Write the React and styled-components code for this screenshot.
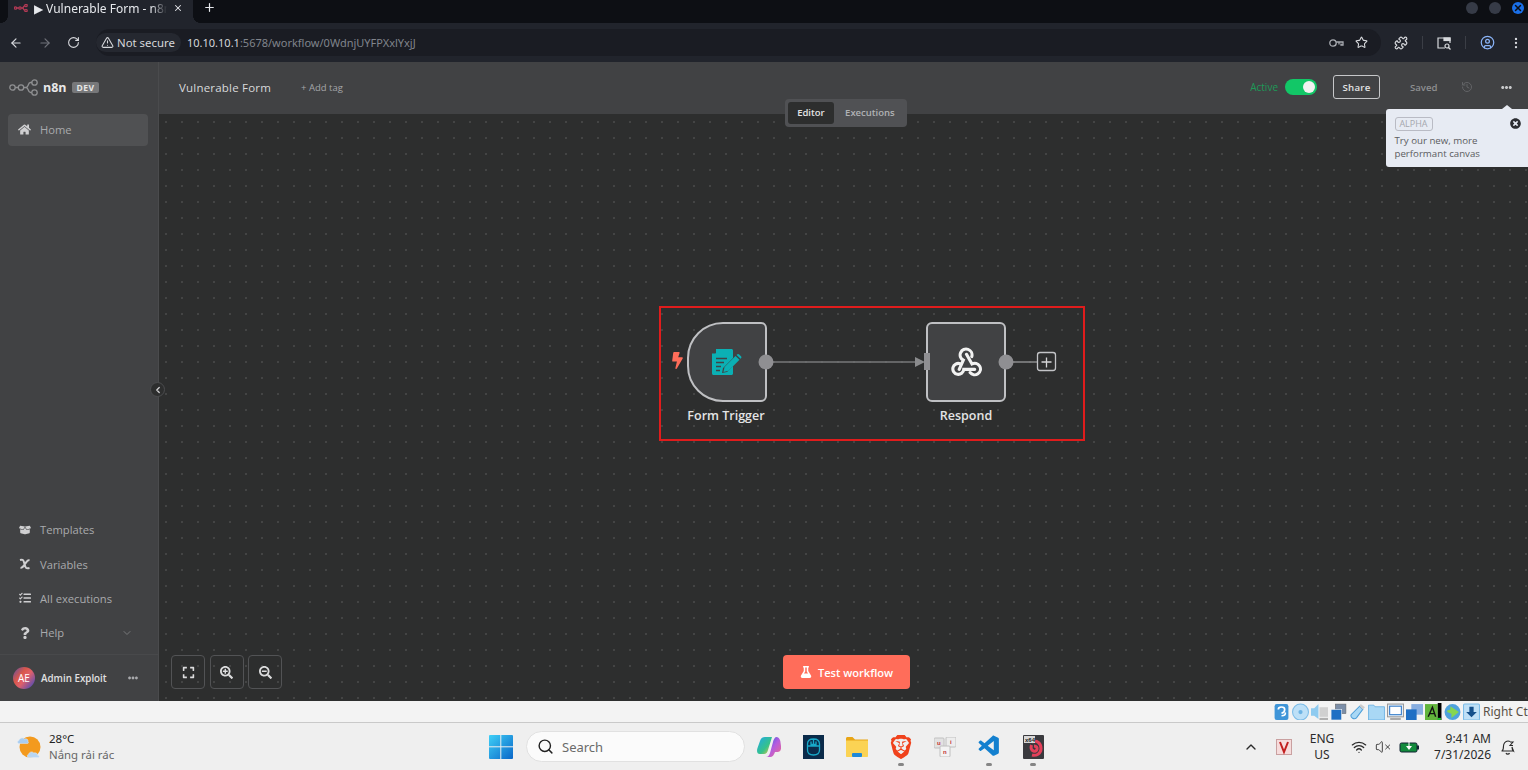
import React from "react";
import styled, { createGlobalStyle } from "styled-components";
import { ArrowLeft, ArrowRight, RotateCw, TriangleAlert, Star, Puzzle, CircleUser, EllipsisVertical, X, Plus, ChevronLeft, ChevronDown, ChevronUp, Search, Wifi, VolumeX, History } from "lucide-react";
import { FaHome, FaBolt, FaFlask, FaQuestion, FaExpand, FaSearchPlus, FaSearchMinus, FaEllipsisH, FaTimesCircle, FaTasks, FaBoxOpen } from "react-icons/fa";
import { SiBrave } from "react-icons/si";
import { VscVscode } from "react-icons/vsc";

const Global = createGlobalStyle`
  html, body { margin: 0; padding: 0; background: #f3f3f3; overflow: hidden; }
  * { box-sizing: border-box; }
  body { font-family: "Open Sans", "Noto Sans", sans-serif; }
`;

const Page = styled.div`width: 1528px; height: 770px; display: flex; flex-direction: column; overflow: hidden;`;

const TabStrip = styled.div`height: 23px; background: #0d0f14; display: flex; align-items: flex-start; padding-left: 8px; color: #e6e8ec; font: 12px "Noto Sans", sans-serif; flex: none;`;
const ActiveTab = styled.div`width: 185px; height: 23px; background: #21242c; display: flex; align-items: center; padding: 0 7px 7px 6px; gap: 6px; position: relative;
  &::before, &::after { content: ""; position: absolute; bottom: 0; width: 7px; height: 7px; background: radial-gradient(circle at var(--c), #0d0f14 6.6px, #21242c 7px); }
  &::before { left: -7px; --c: 0 0; }
  &::after { right: -7px; --c: 100% 0; }`;
const TabTitle = styled.span`width: 133px; overflow: hidden; white-space: nowrap; -webkit-mask-image: linear-gradient(to right, #000 88%, transparent); mask-image: linear-gradient(to right, #000 88%, transparent);`;
const NewTab = styled.div`margin-left: 10px; height: 15px; display: flex; align-items: center;`;
const WindowButtons = styled.div`margin-left: auto; height: 15px; display: flex; align-items: center; gap: 11px; padding-right: 4px;`;
const WindowDot = styled.div`width: 12px; height: 12px; border-radius: 50%; background: ${p => p.$close ? "#1a6fe8" : "#363b47"}; display: flex; align-items: center; justify-content: center; color: #0d0f14;`;

const Toolbar = styled.div`height: 39px; background: #21242c; display: flex; align-items: center; padding-left: 9px; color: #d8dade; flex: none;`;
const NavIcons = styled.div`display: flex; align-items: center; gap: 15px; width: 87px; color: #d8dade;`;
const Omnibox = styled.div`width: 1285px; height: 27px; border-radius: 14px; background: #1a1c23; display: flex; align-items: center; padding-right: 13px; font: 11.4px "Noto Sans", sans-serif;`;
const SecureChip = styled.div`width: 85px; height: 19px; padding-left: 5px; display: flex; align-items: center; gap: 3px; border-radius: 10px; background: #252830; color: #d5d7db; white-space: nowrap;`;
const Url = styled.div`margin-left: 6px; color: #80848c; font-size: 11px; white-space: nowrap; b { color: #d5d7db; font-weight: 400; }`;
const OmniActions = styled.div`margin-left: auto; display: flex; gap: 11px; align-items: center;`;
const ToolEnd = styled.div`display: flex; align-items: center; margin-left: 13px; gap: 14px;`;
const Divider = styled.div`width: 1px; height: 13px; background: #3b3e46;`;

const AppArea = styled.div`height: 639px; display: flex; background: #2d2e2e; flex: none;`;
const Sidebar = styled.aside`width: 159px; background: #414244; border-right: 1px solid #4a4b4d; display: flex; flex-direction: column; flex: none;`;
const Brand = styled.div`height: 52px; display: flex; align-items: center; padding: 0 0 2px 9px; color: #e8e8e8;`;
const BrandName = styled.span`font-weight: 700; font-size: 12.5px; margin-left: 3px;`;
const DevBadge = styled.span`margin-left: 5px; padding: 0 5px; height: 11px; line-height: 11px; background: #77787a; color: #e6e6e6; font-size: 8.5px; font-weight: 700; border-radius: 2px; letter-spacing: .4px;`;
const MenuRow = styled.div`margin: 0 10px 0 8px; height: ${p => p.$active ? "32px" : "34.4px"}; display: flex; align-items: center; padding: 0 0 2px 10px; gap: 9px; border-radius: 4px; background: ${p => p.$active ? "#505153" : "transparent"}; color: #a9aaad; font-size: 11.2px;`;
const MenuIcon = styled.span`width: 13px; display: flex; justify-content: center; color: #cfcfd1;`;
const Spacer = styled.div`flex: 1;`;
const HelpCaret = styled.span`margin-left: auto; margin-right: 15px; display: flex; color: #77787a;`;
const UserRow = styled.div`margin-top: 3px; height: 47px; border-top: 1px solid #48494b; display: flex; align-items: center; padding-left: 13px; color: #e0e0e1; font-size: 9.8px; font-weight: 600;`;
const Avatar = styled.div`width: 22px; height: 22px; border-radius: 50%; background: linear-gradient(130deg, #5a4fa8 0%, #d9574a 35%, #e0606a 55%, #6a4fa8 85%, #3f57b8 100%); color: #fff; font-size: 10px; font-weight: 400; display: flex; align-items: center; justify-content: center;`;
const UserName = styled.span`margin-left: 6px;`;
const UserMore = styled.span`margin-left: auto; margin-right: 20px; display: flex; color: #a9aaad;`;

const Main = styled.main`flex: 1; display: flex; flex-direction: column; position: relative; min-width: 0;`;
const Header = styled.header`height: 52px; background: #414244; display: flex; align-items: center; padding: 0 16px 2px 20px; color: #d8d9db; flex: none; font-size: 12px;`;
const WfTitle = styled.span`font-size: 11.5px; letter-spacing: .2px; width: 122px;`;
const AddTag = styled.span`font-size: 9.5px; color: #a5a6a9;`;
const HeadRight = styled.div`margin-left: auto; display: flex; align-items: center;`;
const ActiveLabel = styled.span`font-size: 10px; color: #1d9a58; margin-right: 7px;`;
const Switch = styled.div`width: 32px; height: 16px; background: #12c767; border-radius: 8px; display: flex; justify-content: flex-end; align-items: center; padding-right: 2px;`;
const Knob = styled.div`width: 12px; height: 12px; border-radius: 50%; background: #f2f2f2;`;
const ShareBtn = styled.button`margin-left: 16px; width: 47px; height: 24px; background: transparent; border: 1px solid #c6c7c9; border-radius: 3px; color: #e2e2e3; font: 600 9.7px "Open Sans", sans-serif; letter-spacing: .2px;`;
const Saved = styled.span`margin-left: 30px; width: 27px; font-size: 9.6px; font-weight: 600; color: #8e8f91;`;
const HistoryWrap = styled.span`margin-left: 24px; display: flex; color: #636467;`;
const MoreWrap = styled.span`margin-left: 28px; display: flex; color: #c8c9cb;`;

const Switcher = styled.div`position: absolute; left: 626px; top: 37px; width: 122px; height: 28px; padding: 3px; background: #505154; border-radius: 4px; display: flex; z-index: 3; font-size: 9.5px; font-weight: 600;`;
const SwitchTab = styled.div`height: 22px; padding: 0 0 2px ${p => p.$active ? "0" : "2px"}; display: flex; align-items: center; justify-content: center; border-radius: 3px; width: ${p => p.$active ? "47px" : "72px"}; background: ${p => p.$active ? "#2d2e2e" : "transparent"}; color: ${p => p.$active ? "#e4e4e5" : "#b1b2b5"};`;

const Popup = styled.div`position: absolute; left: 1227px; top: 47px; width: 142px; height: 58px; background: #e7ebf3; border-radius: 3px 0 0 3px; padding: 8px 8.5px; color: #5b5c60; font-size: 9.7px; line-height: 13px; z-index: 4;
  &::before { content: ""; position: absolute; left: 116px; top: -4px; border: 5px solid transparent; border-top: 0; border-bottom: 4px solid #e7ebf3; }`;
const AlphaTag = styled.span`display: block; width: 38px; height: 14px; line-height: 12px; text-align: center; border: 1px solid #b9bbc4; border-radius: 3px; color: #a5a7ae; font-size: 9px; margin-bottom: 3px;`;
const PopupClose = styled.span`position: absolute; right: 7px; top: 9px; display: flex; color: #2b2c30;`;

const Canvas = styled.div`flex: 1; position: relative; background-color: #2d2e2e; background-image: radial-gradient(circle at center, #505151 0.6px, transparent 0.9px); background-size: 16px 16px; background-position: -1px 0;`;
const RedFrame = styled.div`position: absolute; left: 500px; top: 192px; width: 426px; height: 135px; border: 2px solid #e01c1c;`;
const Edges = styled.svg`position: absolute; left: 0; top: 0; width: 1369px; height: 587px; pointer-events: none;`;
const Node = styled.div`position: absolute; left: ${p => p.$x}px; top: 208px; width: 80px; height: 80px; background: #414244; border: 2px solid #bfc0c3; border-radius: ${p => p.$trigger ? "36px 6px 6px 36px" : "6px"}; display: flex; align-items: center; justify-content: center; color: #f2f2f2;`;
const NodeLabel = styled.div`position: absolute; left: ${p => p.$x}px; top: 293px; width: 120px; text-align: center; color: #e4e4e5; font-size: 12.5px; font-weight: 600;`;
const Bolt = styled.span`position: absolute; left: 510px; top: 238px; display: flex; color: #ff6d5a;`;
const CollapseBtn = styled.div`position: absolute; left: -9px; top: 268px; width: 15px; height: 15px; border-radius: 50%; background: #2d2e2e; border: 1px solid #4c4d4f; display: flex; align-items: center; justify-content: center; color: #d0d0d2; z-index: 2;`;
const CanvasTools = styled.div`position: absolute; left: 12px; bottom: 12px; display: flex; gap: 4.500px;`;
const ToolBtn = styled.div`width: 34px; height: 34px; border: 1px solid #525355; border-radius: 4px; display: flex; align-items: center; justify-content: center; color: #dcdcdd;`;
const TestBtn = styled.button`position: absolute; left: 624px; bottom: 12px; width: 127px; height: 34px; border: 0; border-radius: 4px; background: #ff6d5a; color: #fff; font: 600 11.100px "Open Sans", sans-serif; display: flex; align-items: center; justify-content: center; gap: 6px;`;

const VBoxBar = styled.div`height: 22px; background: #f3f3f3; border-bottom: 1px solid #c9c9c9; display: flex; align-items: center; overflow: hidden; padding-left: 1273px; font: 12px "Noto Sans", sans-serif; color: #5a5046; flex: none;`;
const VBoxIcons = styled.div`display: flex; gap: 2px; align-items: center; flex: none;`;
const VBoxIcon = styled.svg`width: 17px; height: 17px; display: block;`;
const RightCtrl = styled.span`margin-left: 3px; white-space: nowrap; flex: none; width: 46px; overflow: hidden;`;

const Taskbar = styled.div`height: 47px; background: #efefef; display: flex; align-items: center; position: relative; flex: none; color: #222;`;
const Weather = styled.div`width: 489px; display: flex; align-items: center; padding-left: 17px; flex: none;`;
const WeatherText = styled.div`margin-left: 6px; font: 11.500px/16px "Noto Sans", sans-serif; color: #222; small { display: block; font-size: 11.400px; color: #666; }`;
const TaskCenter = styled.div`display: flex; align-items: center; flex: none;`;
const SearchBox = styled.div`margin: 0 2px 0 13px; width: 219px; height: 31px; background: #fbfbfb; border: 1px solid #e1e1e1; border-radius: 16px; display: flex; align-items: center; padding-left: 10px; gap: 8px; color: #6a6a6a; font: 13px "Noto Sans", sans-serif;`;
const AppSlot = styled.div`width: 44px; height: 47px; display: flex; align-items: center; justify-content: center; position: relative; color: ${p => p.$color || "inherit"};
  &::after { content: ""; display: ${p => p.$running ? "block" : "none"}; position: absolute; bottom: 4px; left: 19px; width: 6px; height: 3px; border-radius: 2px; background: #858585; }`;
const Tray = styled.div`position: absolute; right: 0; top: 0; height: 47px; left: 1240px; padding-left: 3px; display: flex; align-items: center; color: #2a2a2a; font: 12px/16px "Noto Sans", sans-serif;`;
const VBadge = styled.svg`width: 16px; height: 16px; margin-left: 17px;`;
const TrayLang = styled.div`width: 30px; text-align: center; margin-left: 15px;`;
const TrayIcons = styled.div`display: flex; gap: 8px; align-items: center; margin-left: 14px;`;
const Clock = styled.div`margin-left: 16px; text-align: right; width: 56px; white-space: nowrap; display: flex; flex-direction: column; align-items: flex-end;`;
const Bell = styled.div`margin-left: 9px; display: flex;`;

const Logo = () => (
  <svg width="31" height="17" viewBox="0 0 31 17" fill="none" stroke="#8f9092" strokeWidth="1.300">
    <circle cx="3.500" cy="8.500" r="2.700" /><circle cx="12" cy="8.500" r="2.700" /><circle cx="25.500" cy="3.500" r="2.700" /><circle cx="25.500" cy="13.500" r="2.700" />
    <path d="M6.200 8.500h3.100M14.700 8.500h2.300c3 0 1.500-5 4.500-5h1.800M17 8.500c3 0 1.500 5 4.500 5h1.300" />
  </svg>
);

const WebhookIcon = () => (
  <svg width="31" height="31" viewBox="0 0 34 34" fill="none" stroke="#f2f2f2" strokeWidth="3.400" strokeLinecap="round">
    <path d="M9 24.500 L13.500 14.500 A6.500 6.500 0 1 1 22.800 10.500" />
    <path d="M17 8 L23 18.600 A6.300 6.300 0 1 1 21 28" />
    <path d="M26 24.500 H14 A6 6 0 1 1 10 18.300" />
  </svg>
);

const FormIcon = () => (
  <svg width="30" height="26" viewBox="0 0 30 26">
    <path fill="#0bb0b4" d="M4 0h15.500c.8 0 1.500.7 1.500 1.500V9L11 19l-1 5 5-1 6-6v7.500c0 .8-.7 1.500-1.500 1.500h-18C.7 26 0 25.300 0 24.500V4.500h3c.6 0 1-.4 1-1z" />
    <path stroke="#414244" strokeWidth="1.500" d="M4 9.500h11M4 13.500h8M4 17.500h5M4 21.500h4" fill="none" />
    <path fill="#0bb0b4" d="M23.500 7l4 3.800-11 11-5 1.200 1-5z" />
    <path fill="#0bb0b4" d="M25 5.500c.7-.7 1.500-.7 2.200 0l1.800 1.700c.6.700.6 1.400 0 2.100l-.5.400-3.900-3.800z" />
  </svg>
);

const WeatherIcon = () => (
  <svg width="26" height="26" viewBox="0 0 26 26">
    <circle cx="13" cy="13" r="10.500" fill="#f39a1e" />
    <path fill="#a9cdf0" stroke="#d9e9f8" strokeWidth=".5" d="M2 9.500c-1.500 0-2-2.500 0-3C2.500 4 6 3 7.500 5c2-.8 4 .5 3.500 2.500.8.500.5 2-.5 2z" />
    <path fill="#b8d6f3" stroke="#e1edf9" strokeWidth=".5" d="M12 23.500c-2 0-2.300-3-.2-3.300.2-2.200 3.500-3.200 5-1.200 2.200-.8 4 .8 3.700 2.200 2 0 2.500 2.300.5 2.300z" />
  </svg>
);

const WinLogo = () => (
  <svg width="24" height="24" viewBox="0 0 24 24">
    <defs><linearGradient id="wl" x1="0" y1="0" x2="1" y2="1"><stop offset="0" stopColor="#3fd0f7" /><stop offset="1" stopColor="#0a66c8" /></linearGradient></defs>
    <rect width="24" height="24" fill="url(#wl)" rx="1" />
    <path stroke="#efefef" strokeWidth="1" d="M11.800 0v24M0 11.800h24" />
  </svg>
);

const Copilot = () => (
  <svg width="24" height="24" viewBox="0 0 24 24">
    <defs>
      <linearGradient id="c1" x1="0" y1="0" x2="1" y2="1"><stop offset="0" stopColor="#1fa8e8" /><stop offset=".6" stopColor="#36c28a" /><stop offset="1" stopColor="#f5c73a" /></linearGradient>
      <linearGradient id="c2" x1="0" y1="0" x2="1" y2="1"><stop offset="0" stopColor="#2460e0" /><stop offset=".5" stopColor="#b45ce0" /><stop offset="1" stopColor="#f06a8a" /></linearGradient>
    </defs>
    <path fill="url(#c1)" d="M8 2h7l-4 13c-.6 2.500-2 4-4 4H3C0 19-.5 16 .5 13L3 6c.8-2.500 2.500-4 5-4z" />
    <path fill="url(#c2)" d="M13 22H9c2 0 3-1.500 4-4l3-11c.6-2.500 1.500-4 3-5 2.500 0 3.500 1.500 4.300 4l.7 5c.5 4-1 6-3.500 6H18c-1 3-2.500 5-5 5z" />
  </svg>
);

const MouseApp = () => (
  <svg width="21" height="24" viewBox="0 0 21 24">
    <rect width="21" height="24" fill="#0b2b4a" />
    <path fill="none" stroke="#18a9c9" strokeWidth="1.300" d="M4.500 9c0-3.500 2.500-5 6-5s6 1.500 6 5v6c0 3.500-2.500 5-6 5s-6-1.500-6-5zM4.500 11h12M10.500 4v7M8 6.500v3h5v-3" />
  </svg>
);

const Folder = () => (
  <svg width="22" height="20" viewBox="0 0 22 20">
    <path fill="#e8a516" d="M0 1.500C0 .7.700 0 1.500 0h5l2.500 2.500h13V8H0z" />
    <path fill="#fbd354" d="M0 3.500h22V19c0 .6-.4 1-1 1H1c-.6 0-1-.4-1-1z" />
    <rect x="6" y="16" width="10" height="4" rx="1" fill="#1e88d8" />
  </svg>
);

const UniKey = () => (
  <svg width="22" height="20" viewBox="0 0 22 20" fontFamily="Liberation Sans" fontWeight="700" fontSize="6">
    <rect x="0" y="1" width="10" height="10" rx="1" fill="#e2e2e2" stroke="#c0c0c0" />
    <rect x="12" y="0" width="10" height="10" rx="1" fill="#ededed" stroke="#c0c0c0" />
    <rect x="6" y="9" width="10" height="11" rx="1" fill="#f3f3f3" stroke="#c0c0c0" />
    <text x="3" y="8" fill="#c23434">u</text><text x="16" y="7" fill="#c23434">i</text><text x="9" y="17" fill="#c23434">n</text>
  </svg>
);

const X64 = () => (
  <svg width="21" height="24" viewBox="0 0 21 24">
    <rect width="21" height="24" rx="1" fill="#3a3a3e" />
    <path fill="none" stroke="#e4405a" strokeWidth="3" d="M9 7c5-2 9 1 9 6.500S13 21 9 20M11 11c2.500 0 3.500 1.500 3 3.500-.5 1.500-2 2-3.500 1.500-2-.8-3-3-2-6" />
    <rect x="1" y="1" width="11" height="7" fill="#d8d8d8" />
    <text x="2" y="7" fontSize="6" fontWeight="700" fontFamily="Liberation Sans" fill="#222">x64</text>
  </svg>
);

const Bat = () => (
  <svg width="20" height="12" viewBox="0 0 20 12">
    <rect x="1" y="2" width="17" height="9" rx="1.500" fill="#128a3c" stroke="#123" strokeWidth="1" />
    <rect x="18" y="4.500" width="2" height="4" fill="#123" />
    <path fill="#fff" d="M9.500 0v5H7l3 4 3-4h-2.500V0z" />
  </svg>
);

const vboxShapes = [
  <><rect x="1.500" y="1" width="13" height="15" rx="2" fill="#3f95d8" /><path d="M5 6c0-3 6-3 6 0s-3 3.500-3 3.500M8 12c3 0 4-1 3.500-3" stroke="#fff" strokeWidth="1.600" fill="none" /></>,
  <><circle cx="8" cy="8.500" r="7.500" fill="#bde0f7" stroke="#7bbce8" /><circle cx="8" cy="8.500" r="2" fill="#6db3e4" /></>,
  <><path d="M0 5h3l4-4v14l-4-3H0z" fill="#8fcbf0" /><rect x="8" y="4" width="8" height="9" fill="#d0d0d0" /><rect x="8" y="14" width="8" height="2" fill="#b0b0b0" /></>,
  <><rect x="5" y="1" width="10" height="9" fill="#7b8ea8" stroke="#666" strokeWidth=".5" /><rect x="1" y="6" width="10" height="10" fill="#1f6fc4" stroke="#eee" strokeWidth=".6" /></>,
  <><path d="M10 3l3 3-6 8c-2 2-6 0-5-3z" fill="#a9d8f5" stroke="#4f9fd8" /><path d="M11 1l4 3-2 2-3-3z" fill="#ccc" /></>,
  <><path d="M0.500 2h5l1 1.500h9v12.500H.500z" fill="#a9d8f5" stroke="#5aa9e0" strokeWidth=".7" /></>,
  <><rect x=".5" y="1" width="15" height="12" fill="#e8f2fb" stroke="#999" /><rect x="2.500" y="3" width="11" height="8" fill="#fff" stroke="#2f78c8" /><rect x="3" y="14" width="10" height="2" fill="#aaa" /></>,
  <><rect x="5" y="1" width="11" height="10" fill="#88aee0" /><rect x="0" y="6" width="10" height="10" fill="#1f6fc4" /></>,
  <><rect x="0" y="1" width="12" height="15" fill="#62b53c" /><path d="M3 13L7 4l3 9M4 10h5" stroke="#111" strokeWidth="1.300" fill="none" /><rect x="12" y="0" width="3.500" height="16" fill="#000" /><rect x="12" y="14" width="3" height="2" fill="#1ec02a" /></>,
  <><circle cx="8" cy="8.500" r="7.500" fill="#4fa2dd" /><path d="M6 3l8 5.500-7 5.500V10L3 8.500V7l3-1z" fill="#86d64f" /></>,
  <><rect x=".5" y="1" width="15" height="15" rx="1" fill="#bfe0f7" stroke="#7bbce8" /><path d="M6 3.500h4v5h3l-5 5-5-5h3z" fill="#14508c" /></>,
];

export default function App() {
  return (
    <Page>
      <Global />
      <TabStrip>
        <ActiveTab>
          <svg width="14" height="8" viewBox="0 0 14 8" fill="none" stroke="#b23a55" strokeWidth="1.300"><circle cx="1.500" cy="4" r="1.200" /><circle cx="6" cy="4" r="1.200" /><circle cx="12" cy="1.500" r="1.200" /><circle cx="12" cy="6.500" r="1.200" /><path d="M2.700 4h2.100M7.200 4h1.500l2-2.500M8.700 4l2 2.500" /></svg>
          <TabTitle>▶ Vulnerable Form - n8n</TabTitle>
          <X size={10} strokeWidth={2.500} />
        </ActiveTab>
        <NewTab><Plus size={13} strokeWidth={2.200} /></NewTab>
        <WindowButtons>
          <WindowDot /><WindowDot /><WindowDot $close><X size={10} strokeWidth={3.500} /></WindowDot>
        </WindowButtons>
      </TabStrip>
      <Toolbar>
        <NavIcons>
          <ArrowLeft size={14} />
          <ArrowRight size={14} color="#70737a" />
          <RotateCw size={13} />
        </NavIcons>
        <Omnibox>
          <SecureChip><TriangleAlert size={13} />Not secure</SecureChip>
          <Url><b>10.10.10.1</b>:5678/workflow/0WdnjUYFPXxlYxjJ</Url>
          <OmniActions>
            <svg width="15" height="10" viewBox="0 0 15 10" fill="none" stroke="#a9acb2" strokeWidth="1.300"><circle cx="4" cy="5" r="3.200" /><path d="M7.200 4H14v3h-2V5.500M10 4v2.500" /></svg>
            <Star size={13} />
          </OmniActions>
        </Omnibox>
        <ToolEnd>
          <Puzzle size={14} />
          <Divider />
          <svg width="14" height="14" viewBox="0 0 14 14" fill="none" stroke="#d8dade" strokeWidth="1.200"><path d="M8 12H1V2h12v5" /><rect x="7" y="2" width="6" height="2.500" fill="#d8dade" /><circle cx="10" cy="10" r="2" /><path d="M11.500 11.500L13.500 13.500" /></svg>
          <Divider />
          <CircleUser size={15} color="#8ab4f8" />
          <EllipsisVertical size={14} />
        </ToolEnd>
      </Toolbar>
      <AppArea>
        <Sidebar>
          <Brand><Logo /><BrandName>n8n</BrandName><DevBadge>DEV</DevBadge></Brand>
          <MenuRow $active><MenuIcon><FaHome size={13} /></MenuIcon>Home</MenuRow>
          <Spacer />
          <MenuRow><MenuIcon><FaBoxOpen size={12} /></MenuIcon>Templates</MenuRow>
          <MenuRow><MenuIcon>
            <svg width="12" height="12" viewBox="0 0 12 12" fill="none" stroke="#cfcfd1" strokeWidth="2"><path d="M1 2c3-1 3.500 0 4.500 4s1.500 5 5 4M1.500 10c2.500 0 3-2 4.500-4s2-4 4.500-4" /></svg>
          </MenuIcon>Variables</MenuRow>
          <MenuRow><MenuIcon><FaTasks size={12} /></MenuIcon>All executions</MenuRow>
          <MenuRow><MenuIcon><FaQuestion size={12} /></MenuIcon>Help<HelpCaret><ChevronDown size={12} /></HelpCaret></MenuRow>
          <UserRow><Avatar>AE</Avatar><UserName>Admin Exploit</UserName><UserMore><FaEllipsisH size={10} /></UserMore></UserRow>
        </Sidebar>
        <Main>
          <Header>
            <WfTitle>Vulnerable Form</WfTitle>
            <AddTag>+ Add tag</AddTag>
            <HeadRight>
              <ActiveLabel>Active</ActiveLabel>
              <Switch><Knob /></Switch>
              <ShareBtn>Share</ShareBtn>
              <Saved>Saved</Saved>
              <HistoryWrap><History size={12} /></HistoryWrap>
              <MoreWrap><FaEllipsisH size={11} /></MoreWrap>
            </HeadRight>
          </Header>
          <Switcher><SwitchTab $active>Editor</SwitchTab><SwitchTab>Executions</SwitchTab></Switcher>
          <Popup>
            <AlphaTag>ALPHA</AlphaTag>
            Try our new, more<br />performant canvas
            <PopupClose><FaTimesCircle size={11} /></PopupClose>
          </Popup>
          <Canvas>
            <CollapseBtn><ChevronLeft size={10} strokeWidth={3} /></CollapseBtn>
            <RedFrame />
            <Edges viewBox="0 0 1369 587">
              <path d="M614 248H758" stroke="#77787a" strokeWidth="1.500" />
              <path d="M756 243l10 5-10 5z" fill="#8a8b8d" />
              <path d="M853 248H878" stroke="#8a8b8d" strokeWidth="1.500" />
            </Edges>
            <Bolt><FaBolt size={17} /></Bolt>
            <Node $x={528} $trigger><FormIcon /></Node>
            <Node $x={767}><WebhookIcon /></Node>
            <Edges viewBox="0 0 1369 587">
              <circle cx="607" cy="248" r="7.500" fill="#8f8f92" />
              <rect x="765" y="239" width="6" height="17" fill="#8f8f92" />
              <circle cx="847" cy="248" r="7.500" fill="#8f8f92" />
              <rect x="878.500" y="238.500" width="18" height="18" rx="2.500" fill="#2d2e2e" stroke="#c3c4c7" strokeWidth="1.300" />
              <path d="M887.500 243.500v10M882.500 248h10" stroke="#d5d5d7" strokeWidth="1.300" />
            </Edges>
            <NodeLabel $x={507}>Form Trigger</NodeLabel>
            <NodeLabel $x={747}>Respond</NodeLabel>
            <CanvasTools>
              <ToolBtn><FaExpand size={13} /></ToolBtn>
              <ToolBtn><FaSearchPlus size={13} /></ToolBtn>
              <ToolBtn><FaSearchMinus size={13} /></ToolBtn>
            </CanvasTools>
            <TestBtn><FaFlask size={12} />Test workflow</TestBtn>
          </Canvas>
        </Main>
      </AppArea>
      <VBoxBar>
        <VBoxIcons>
          {vboxShapes.map((s, i) => <VBoxIcon key={i} viewBox="0 0 16 16">{s}</VBoxIcon>)}
        </VBoxIcons>
        <RightCtrl>Right Ctrl</RightCtrl>
      </VBoxBar>
      <Taskbar>
        <Weather>
          <WeatherIcon />
          <WeatherText>28°C<small>Nắng rải rác</small></WeatherText>
        </Weather>
        <TaskCenter>
          <WinLogo />
          <SearchBox><Search size={17} color="#222" />Search</SearchBox>
          <AppSlot><Copilot /></AppSlot>
          <AppSlot><MouseApp /></AppSlot>
          <AppSlot><Folder /></AppSlot>
          <AppSlot $running $color="#f0421c"><SiBrave size={24} /></AppSlot>
          <AppSlot><UniKey /></AppSlot>
          <AppSlot $running $color="#1380cf"><VscVscode size={25} /></AppSlot>
          <AppSlot $running><X64 /></AppSlot>
        </TaskCenter>
        <Tray>
          <ChevronUp size={16} />
          <VBadge viewBox="0 0 16 16"><rect x=".5" y=".5" width="15" height="15" fill="#f6dcdc" stroke="#c9a0a0" /><path d="M4 3l4 10 4-10" fill="none" stroke="#c21f1f" strokeWidth="2" /></VBadge>
          <TrayLang>ENG<br />US</TrayLang>
          <TrayIcons>
            <Wifi size={16} />
            <VolumeX size={16} strokeWidth={1.300} />
            <Bat />
          </TrayIcons>
          <Clock><span>9:41 AM</span><span>7/31/2026</span></Clock>
          <Bell>
            <svg width="15" height="16" viewBox="0 0 15 16" fill="none" stroke="#2a2a2a" strokeWidth="1.100"><path d="M2 12c1.500-1 1.500-3 1.500-5S5 2 8 2c1 0 1.500.2 2 .5M12 8c0 2 0 3 1.500 4zM1.500 12h12.500M6 14c.5 1.500 3 1.500 3.500 0M10 3h3l-3 3.500h3" /></svg>
          </Bell>
        </Tray>
      </Taskbar>
    </Page>
  );
}
